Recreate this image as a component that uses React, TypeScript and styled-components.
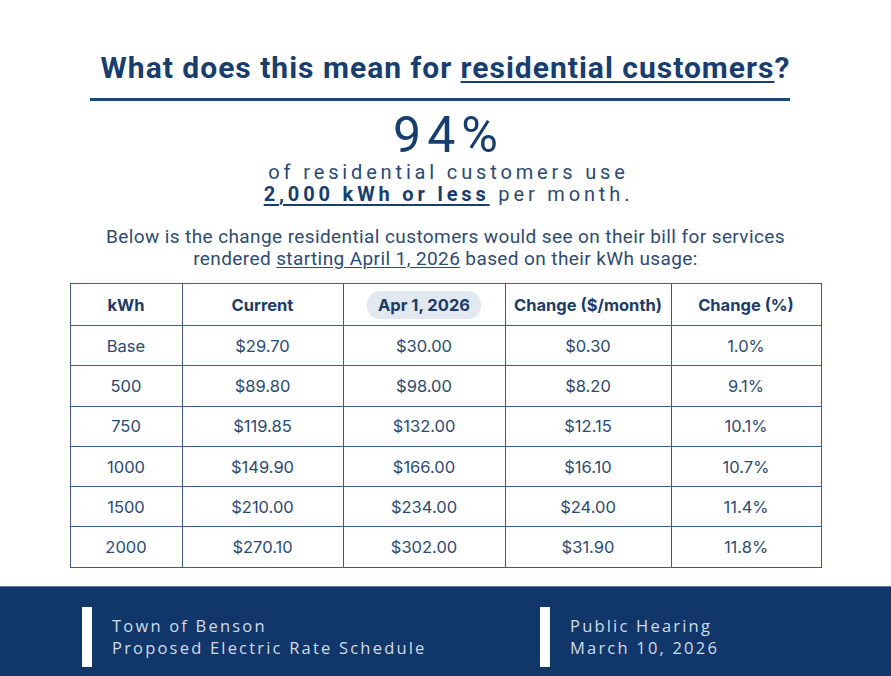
import styled, { createGlobalStyle } from "styled-components";

const GlobalStyle = createGlobalStyle`
  html, body {
    margin: 0;
    padding: 0;
    background: #ffffff;
  }
  * {
    box-sizing: border-box;
  }
`;

const rows = [
  { kwh: "Base", current: "$29.70", next: "$30.00", change: "$0.30", pct: "1.0%" },
  { kwh: "500", current: "$89.80", next: "$98.00", change: "$8.20", pct: "9.1%" },
  { kwh: "750", current: "$119.85", next: "$132.00", change: "$12.15", pct: "10.1%" },
  { kwh: "1000", current: "$149.90", next: "$166.00", change: "$16.10", pct: "10.7%" },
  { kwh: "1500", current: "$210.00", next: "$234.00", change: "$24.00", pct: "11.4%" },
  { kwh: "2000", current: "$270.10", next: "$302.00", change: "$31.90", pct: "11.8%" },
];

export default function App() {
  return (
    <>
      <GlobalStyle />
      <Page>
        <Main>
          <Title>
            What does this mean for <u>residential customers</u>?
          </Title>
          <Rule />
          <BigStat>94%</BigStat>
          <StatText>of residential customers use</StatText>
          <StatText>
            <Strong>2,000 kWh or less</Strong> per month.
          </StatText>
          <Lead>
            Below is the change residential customers would see on their bill for services
            <br />
            rendered <u>starting April 1, 2026</u> based on their kWh usage:
          </Lead>
          <Table>
            <colgroup>
              <col style={{ width: 112 }} />
              <col style={{ width: 161 }} />
              <col style={{ width: 162 }} />
              <col style={{ width: 166 }} />
              <col style={{ width: 150 }} />
            </colgroup>
            <thead>
              <tr>
                <Th>kWh</Th>
                <Th>Current</Th>
                <Th>
                  <Pill>Apr 1, 2026</Pill>
                </Th>
                <Th>Change ($/month)</Th>
                <Th>Change (%)</Th>
              </tr>
            </thead>
            <tbody>
              {rows.map((r) => (
                <tr key={r.kwh}>
                  <Td>{r.kwh}</Td>
                  <Td>{r.current}</Td>
                  <Td>{r.next}</Td>
                  <Td>{r.change}</Td>
                  <Td>{r.pct}</Td>
                </tr>
              ))}
            </tbody>
          </Table>
        </Main>
        <Footer>
          <FooterItem>
            <Bar />
            <FooterText>
              Town of Benson
              <br />
              Proposed Electric Rate Schedule
            </FooterText>
          </FooterItem>
          <FooterItem>
            <Bar />
            <FooterText>
              Public Hearing
              <br />
              March 10, 2026
            </FooterText>
          </FooterItem>
        </Footer>
      </Page>
    </>
  );
}

const Page = styled.div`
  width: 891px;
  height: 676px;
  display: flex;
  flex-direction: column;
  background: #ffffff;
  overflow: hidden;
`;

const Main = styled.main`
  flex: 1;
  display: flex;
  flex-direction: column;
  align-items: center;
  padding-top: 50px;
  color: #173e6e;
`;

const Title = styled.h1`
  margin: 0;
  font-family: Roboto, "Liberation Sans", sans-serif;
  font-weight: 700;
  font-size: 30px;
  line-height: 36px;
  letter-spacing: 1px;
  color: #173e6e;

  u {
    text-decoration-thickness: 2px;
    text-underline-offset: 3px;
  }
`;

const Rule = styled.hr`
  width: 700px;
  height: 3px;
  margin: 12px 12px 0 0;
  border: 0;
  background: #1f4677;
`;

const BigStat = styled.div`
  margin-top: 8px;
  font-family: Roboto, "Liberation Sans", sans-serif;
  font-weight: 400;
  font-size: 50px;
  line-height: 52px;
  letter-spacing: 6px;
  padding-left: 6px;
  color: #173e6e;
`;

const StatText = styled.div`
  font-family: Roboto, "Liberation Sans", sans-serif;
  font-size: 20px;
  line-height: 22px;
  letter-spacing: 3.85px;
  padding-left: 6px;
  color: #2a4a75;
`;

const Strong = styled.span`
  font-weight: 700;
  text-decoration: underline;
  text-decoration-thickness: 2px;
  text-underline-offset: 3px;
  color: #173e6e;
`;

const Lead = styled.p`
  margin: 21px 0 0;
  text-align: center;
  font-family: Roboto, "Liberation Sans", sans-serif;
  font-size: 19px;
  line-height: 22px;
  letter-spacing: 0.4px;
  color: #2e4b72;

  u {
    text-underline-offset: 2px;
  }
`;

const Table = styled.table`
  margin-top: 13px;
  width: 751px;
  border-collapse: collapse;
  table-layout: fixed;
  font-family: Inter, "Liberation Sans", Arial, sans-serif;
  font-size: 16.5px;
  color: #2b4a73;
`;

const Th = styled.th`
  height: 42px;
  padding: 0;
  border: 1px solid #3d5d88;
  font-weight: 700;
  color: #1b3b68;
  text-align: center;
  vertical-align: middle;
`;

const Td = styled.td`
  height: 40.3px;
  padding: 0;
  border: 1px solid #3d5d88;
  text-align: center;
  vertical-align: middle;
`;

const Pill = styled.span`
  display: inline-block;
  padding: 4px 11px;
  border-radius: 13px;
  background: #e2e8ef;
`;

const Footer = styled.footer`
  height: 90px;
  display: grid;
  grid-template-columns: 458px 1fr;
  padding: 20px 0 9px 82px;
  background: #11376a;
  border-top: 1px solid #5d7898;
`;

const FooterItem = styled.div`
  display: flex;
  align-items: center;
  gap: 20px;
`;

const Bar = styled.div`
  width: 10px;
  align-self: stretch;
  background: #ffffff;
`;

const FooterText = styled.div`
  font-family: "Open Sans", Lato, sans-serif;
  font-size: 16.5px;
  line-height: 22px;
  letter-spacing: 2.2px;
  color: #d3dbe6;
`;
